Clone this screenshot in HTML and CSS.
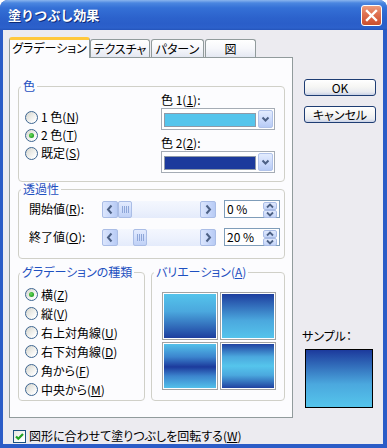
FILE: index.html
```html
<!DOCTYPE html>
<html lang="ja">
<head>
<meta charset="utf-8">
<title>塗りつぶし効果</title>
<link rel="stylesheet" href="styles.css">
</head>
<body>
<div class="window">
  <div class="titlebar">
    <span class="title">塗りつぶし効果</span>
    <span class="close"><svg width="19" height="19" viewBox="0 0 19 19"><path d="M5 5 L14 14 M14 5 L5 14" stroke="#fff" stroke-width="2.4" stroke-linecap="square"/></svg></span>
  </div>
  <div class="client">
    <div class="main">
      <div class="left">
        <div class="tabs">
          <div class="tab active">グラデーション</div>
          <div class="tab t2">テクスチャ</div>
          <div class="tab t3">パターン</div>
          <div class="tab t4">図</div>
        </div>
        <div class="panel">
          <fieldset class="group g-color">
            <legend>色</legend>
            <div class="color-body">
              <div class="radios">
                <div class="radio-row"><span class="radio"></span><span>1 色(<u>N</u>)</span></div>
                <div class="radio-row"><span class="radio on"></span><span>2 色(<u>T</u>)</span></div>
                <div class="radio-row"><span class="radio"></span><span>既定(<u>S</u>)</span></div>
              </div>
              <div class="combos">
                <div class="combo-label">色 1(<u>1</u>):</div>
                <div class="combo">
                  <span class="swatch light"></span>
                  <span class="drop"><svg width="13" height="16" viewBox="0 0 13 16"><path d="M3.5 6.5 L6.5 9.5 L9.5 6.5" fill="none" stroke="#4D6185" stroke-width="2"/></svg></span>
                </div>
                <div class="combo-label second">色 2(<u>2</u>):</div>
                <div class="combo">
                  <span class="swatch dark"></span>
                  <span class="drop"><svg width="13" height="16" viewBox="0 0 13 16"><path d="M3.5 6.5 L6.5 9.5 L9.5 6.5" fill="none" stroke="#4D6185" stroke-width="2"/></svg></span>
                </div>
              </div>
            </div>
          </fieldset>

          <fieldset class="group g-trans">
            <legend>透過性</legend>
            <div class="trans-body">
              <div class="slider-row">
                <span class="slider-label">開始値(<u>R</u>):</span>
                <div class="scroll">
                  <span class="sbtn"><svg width="14" height="15" viewBox="0 0 14 15"><path d="M8.5 3.5 L5 7.5 L8.5 11.5" fill="none" stroke="#4D6185" stroke-width="2"/></svg></span>
                  <span class="thumb" style="margin-left:0px"><i></i><i></i><i></i><i></i></span>
                  <span class="track"></span>
                  <span class="sbtn"><svg width="14" height="15" viewBox="0 0 14 15"><path d="M5.5 3.5 L9 7.5 L5.5 11.5" fill="none" stroke="#4D6185" stroke-width="2"/></svg></span>
                </div>
                <div class="edit">
                  <span class="edit-text">0 %</span>
                  <span class="spin">
                    <span class="spin-half"><svg width="12" height="6" viewBox="0 0 12 6"><path d="M3 4.5 L6 1.5 L9 4.5" fill="none" stroke="#4D6185" stroke-width="1.8"/></svg></span>
                    <span class="spin-half"><svg width="12" height="6" viewBox="0 0 12 6"><path d="M3 1.5 L6 4.5 L9 1.5" fill="none" stroke="#4D6185" stroke-width="1.8"/></svg></span>
                  </span>
                </div>
              </div>
              <div class="slider-row">
                <span class="slider-label">終了値(<u>O</u>):</span>
                <div class="scroll">
                  <span class="sbtn"><svg width="14" height="15" viewBox="0 0 14 15"><path d="M8.5 3.5 L5 7.5 L8.5 11.5" fill="none" stroke="#4D6185" stroke-width="2"/></svg></span>
                  <span class="thumb" style="margin-left:15px"><i></i><i></i><i></i><i></i></span>
                  <span class="track"></span>
                  <span class="sbtn"><svg width="14" height="15" viewBox="0 0 14 15"><path d="M5.5 3.5 L9 7.5 L5.5 11.5" fill="none" stroke="#4D6185" stroke-width="2"/></svg></span>
                </div>
                <div class="edit">
                  <span class="edit-text">20 %</span>
                  <span class="spin">
                    <span class="spin-half"><svg width="12" height="6" viewBox="0 0 12 6"><path d="M3 4.5 L6 1.5 L9 4.5" fill="none" stroke="#4D6185" stroke-width="1.8"/></svg></span>
                    <span class="spin-half"><svg width="12" height="6" viewBox="0 0 12 6"><path d="M3 1.5 L6 4.5 L9 1.5" fill="none" stroke="#4D6185" stroke-width="1.8"/></svg></span>
                  </span>
                </div>
              </div>
            </div>
          </fieldset>

          <div class="bottom-groups">
            <fieldset class="group g-types">
              <legend>グラデーションの種類</legend>
              <div class="types-body">
                <div class="radio-row tall"><span class="radio on"></span><span>横(<u>Z</u>)</span></div>
                <div class="radio-row tall"><span class="radio"></span><span>縦(<u>V</u>)</span></div>
                <div class="radio-row tall"><span class="radio"></span><span>右上対角線(<u>U</u>)</span></div>
                <div class="radio-row tall"><span class="radio"></span><span>右下対角線(<u>D</u>)</span></div>
                <div class="radio-row tall"><span class="radio"></span><span>角から(<u>F</u>)</span></div>
                <div class="radio-row tall"><span class="radio"></span><span>中央から(<u>M</u>)</span></div>
              </div>
            </fieldset>
            <fieldset class="group g-vari">
              <legend>バリエーション(<u>A</u>)</legend>
              <div class="tiles">
                <div class="tile v1"></div>
                <div class="tile v2"></div>
                <div class="tile v3"></div>
                <div class="tile v4"></div>
              </div>
            </fieldset>
          </div>
        </div>
      </div>
      <div class="right">
        <div class="btn">OK</div>
        <div class="btn cancel">キャンセル</div>
        <div class="sample-wrap">
          <div class="sample-label">サンプル：</div>
          <div class="sample"></div>
        </div>
      </div>
    </div>
    <div class="checkrow">
      <span class="checkbox"><svg width="11" height="11" viewBox="0 0 11 11"><path d="M2 5.5 L4.3 7.8 L9 3" fill="none" stroke="#21A121" stroke-width="2.2"/></svg></span>
      <span>図形に合わせて塗りつぶしを回転する(<u>W</u>)</span>
    </div>
  </div>
</div>
</body>
</html>
```

FILE: styles.css
```css
* { box-sizing: border-box; }
html, body { margin: 0; padding: 0; }
body {
  background: #ffffff;
  font-family: "Noto Sans CJK JP", "Noto Sans", sans-serif;
  font-size: 12px;
  line-height: 14px;
  color: #000;
  font-feature-settings: "palt";
}
u { text-decoration: underline; text-underline-offset: 1px; }

.window {
  width: 387px;
  height: 448px;
  display: flex;
  flex-direction: column;
  background: #2B5CC7;
  border-radius: 8px 8px 0 0;
  overflow: hidden;
}
.titlebar {
  height: 30px;
  flex: none;
  display: flex;
  align-items: center;
  justify-content: space-between;
  padding: 0 5px 0 8px;
  background: linear-gradient(180deg, #8AB5EE 0px, #4A86E0 3px, #3470D6 8px, #2C62CC 18px, #2A5EC9 24px, #2C61CB 28px, #2454BA 30px);
}
.title {
  color: #fff;
  font-weight: bold;
  font-size: 13px;
  line-height: 16px;
  text-shadow: 1px 1px 0 #0C2A78;
  font-feature-settings: normal;
}
.close {
  width: 21px;
  height: 21px;
  border: 1px solid #fff;
  border-radius: 3px;
  background: linear-gradient(180deg, #EE9D7E 0%, #E07353 40%, #D4593A 80%, #C8502F 100%);
  display: flex;
  align-items: center;
  justify-content: center;
}

.client {
  flex: 1;
  margin: 0 4px 4px 3px;
  background: #ECEBF0;
  display: flex;
  flex-direction: column;
}
.main {
  display: flex;
  height: 388px;
}
.left {
  padding: 7px 0 0 6px;
  display: flex;
  flex-direction: column;
}
.tabs {
  display: flex;
  align-items: flex-end;
  height: 20px;
}
.tab {
  height: 18px;
  border: 1px solid #919B9C;
  border-bottom: none;
  border-radius: 3px 3px 0 0;
  background: linear-gradient(180deg, #FFFFFF 0%, #F6F7FB 50%, #E4E8F2 100%);
  text-align: center;
  line-height: 17px;
}
.tab.active {
  width: 81px;
  height: 21px;
  margin-bottom: -1px;
  position: relative;
  z-index: 1;
  background: #FCFCFE;
  border-top: 3px solid #FFC83C;
  box-shadow: inset 0 0 0 0 transparent;
  line-height: 16px;
}
.tab.t2 { width: 60px; }
.tab.t3 { width: 53px; margin-left: 1px; }
.tab.t4 { width: 51px; margin-left: 1px; }

.panel {
  width: 284px;
  height: 361px;
  border: 1px solid #919B9C;
  background: #FCFCFE;
  padding: 21px 7px 0 8px;
}

fieldset.group {
  margin: 0;
  padding: 0;
  border: 1px solid #D0D0C8;
  border-radius: 4px;
  min-width: 0;
}
legend {
  padding: 0 2px;
  margin-left: 2px;
  color: #1E50C0;
  line-height: 14px;
}

.g-color { height: 103px; }
.color-body {
  display: flex;
  justify-content: space-between;
  height: 88px;
}
.radios {
  padding: 15px 0 0 6px;
  display: flex;
  flex-direction: column;
}
.radio-row {
  height: 18px;
  display: flex;
  align-items: center;
  gap: 3px;
  white-space: nowrap;
}
.radio-row.tall { height: 19px; }
.radio {
  width: 13px;
  height: 13px;
  flex: none;
  border-radius: 50%;
  border: 1px solid #3D6591;
  background: linear-gradient(135deg, #D4D4CC 0%, #ECECE8 45%, #FFFFFF 85%);
  display: flex;
  align-items: center;
  justify-content: center;
}
.radio.on::after {
  content: "";
  width: 5px;
  height: 5px;
  border-radius: 50%;
  background: radial-gradient(circle at 40% 40%, #6EDB5E 0%, #2BA82B 60%, #1E8E1E 100%);
}

.combos {
  width: 114px;
  margin-right: 9px;
}
.combo-label { height: 14px; }
.combo-label.second { margin-top: 6px; }
.combo {
  margin-top: 1px;
  height: 22px;
  border: 1px solid #A5ACB5;
  background: #fff;
  display: flex;
  align-items: center;
  padding: 0 1px 0 2px;
}
.swatch {
  width: 92px;
  height: 14px;
  margin-top: 2px;
  border: 1px solid #8F9AA8;
}
.swatch.light { background: #55C5EC; }
.swatch.dark { background: #1C3A9C; }
.drop {
  margin-left: auto;
  width: 15px;
  height: 18px;
  border: 1px solid #B1C3EA;
  border-radius: 2px;
  background: linear-gradient(180deg, #E3ECFE 0%, #CAD9FB 60%, #B7CBF5 100%);
  display: flex;
  align-items: center;
  justify-content: center;
}

.g-trans { height: 77px; margin-top: 8px; }
.trans-body {
  padding: 3px 0 0 10px;
  display: flex;
  flex-direction: column;
  gap: 8px;
}
.slider-row {
  height: 20px;
  display: flex;
  align-items: center;
}
.slider-label { width: 73px; white-space: nowrap; }
.scroll {
  width: 114px;
  height: 17px;
  display: flex;
  margin-right: 8px;
  background: linear-gradient(180deg, #F4F7FE 0%, #EDF2FD 50%, #E4EBFB 100%);
  border-radius: 2px;
}
.sbtn, .thumb {
  flex: none;
  height: 17px;
  border: 1px solid #AABDE6;
  border-radius: 2px;
  background: linear-gradient(90deg, #DCE6FD 0%, #C6D6FA 60%, #B8CBF4 100%);
  display: flex;
  align-items: center;
  justify-content: center;
}
.sbtn { width: 16px; }
.thumb {
  width: 14px;
  margin-left: 0;
  gap: 1px;
  background: linear-gradient(180deg, #E3EBFE 0%, #CEDCFB 60%, #C0D1F6 100%);
}
.thumb i {
  display: block;
  width: 1px;
  height: 7px;
  background: #8EA6D8;
}
.track { flex: 1; }

.edit {
  width: 56px;
  height: 18px;
  border: 1px solid #7F9DB9;
  background: #fff;
  display: flex;
  align-items: center;
  padding: 0 2px 0 2px;
}
.edit-text { flex: 1; line-height: 14px; }
.spin {
  width: 14px;
  height: 15px;
  display: flex;
  flex-direction: column;
}
.spin-half {
  flex: 1;
  border: 1px solid #AABDE6;
  border-radius: 2px;
  background: linear-gradient(180deg, #E0E9FD 0%, #C3D4F8 100%);
  display: flex;
  align-items: center;
  justify-content: center;
}

.bottom-groups {
  display: flex;
  gap: 6px;
  margin-top: 6px;
  height: 136px;
}
.g-types { width: 127px; height: 136px; }
.g-vari { width: 134px; height: 136px; }
.g-types legend { margin-left: 1px; white-space: nowrap; }
.types-body {
  padding: 6px 0 0 6px;
  display: flex;
  flex-direction: column;
}
.tiles {
  padding: 13px 0 0 10px;
  display: grid;
  grid-template-columns: 56px 56px;
  grid-auto-rows: 48px;
  gap: 2px;
}
.tile {
  border: 1px solid #A3A3A3;
  box-shadow: inset 0 0 0 1px #ffffff;
}
.v1 { background: linear-gradient(180deg, #55C5EC 0%, #4BA8DE 40%, #1C3A9C 100%); }
.v2 { background: linear-gradient(180deg, #1C3A9C 0%, #4BA8DE 60%, #55C5EC 100%); }
.v3 { background: linear-gradient(180deg, #55C5EC 0%, #3C85CE 30%, #1C3A9C 52%, #3C85CE 72%, #55C5EC 100%); }
.v4 { background: linear-gradient(180deg, #1C3A9C 0%, #4BA8DE 30%, #55C5EC 50%, #4BA8DE 70%, #1C3A9C 100%); }

.right {
  margin-left: 11px;
  width: 72px;
  padding: 49px 0 10px 0;
  display: flex;
  flex-direction: column;
}
.btn {
  height: 17px;
  width: 72px;
  border: 1px solid #1E3D73;
  border-radius: 3px;
  background: linear-gradient(180deg, #FFFFFF 0%, #F6F6F4 45%, #E9EBF0 80%, #C8D1E6 100%);
  text-align: center;
  line-height: 15px;
}
.btn.cancel { margin-top: 10px; }
.sample-wrap { margin-top: auto; }
.sample-label { margin-left: -2px; line-height: 14px; white-space: nowrap; }
.sample {
  width: 68px;
  height: 59px;
  margin: 6px 0 0 1px;
  border: 1px solid #000;
  background: linear-gradient(180deg, #1C3A9C 0%, #4BA8DE 60%, #55C5EC 100%);
}

.checkrow {
  height: 26px;
  display: flex;
  align-items: center;
  gap: 3px;
  padding: 10px 0 0 10px;
  white-space: nowrap;
}
.checkbox {
  width: 13px;
  height: 13px;
  border: 1px solid #1C5180;
  background: linear-gradient(135deg, #E6E6E0 0%, #FFFFFF 80%);
  display: flex;
  align-items: center;
  justify-content: center;
}
```
